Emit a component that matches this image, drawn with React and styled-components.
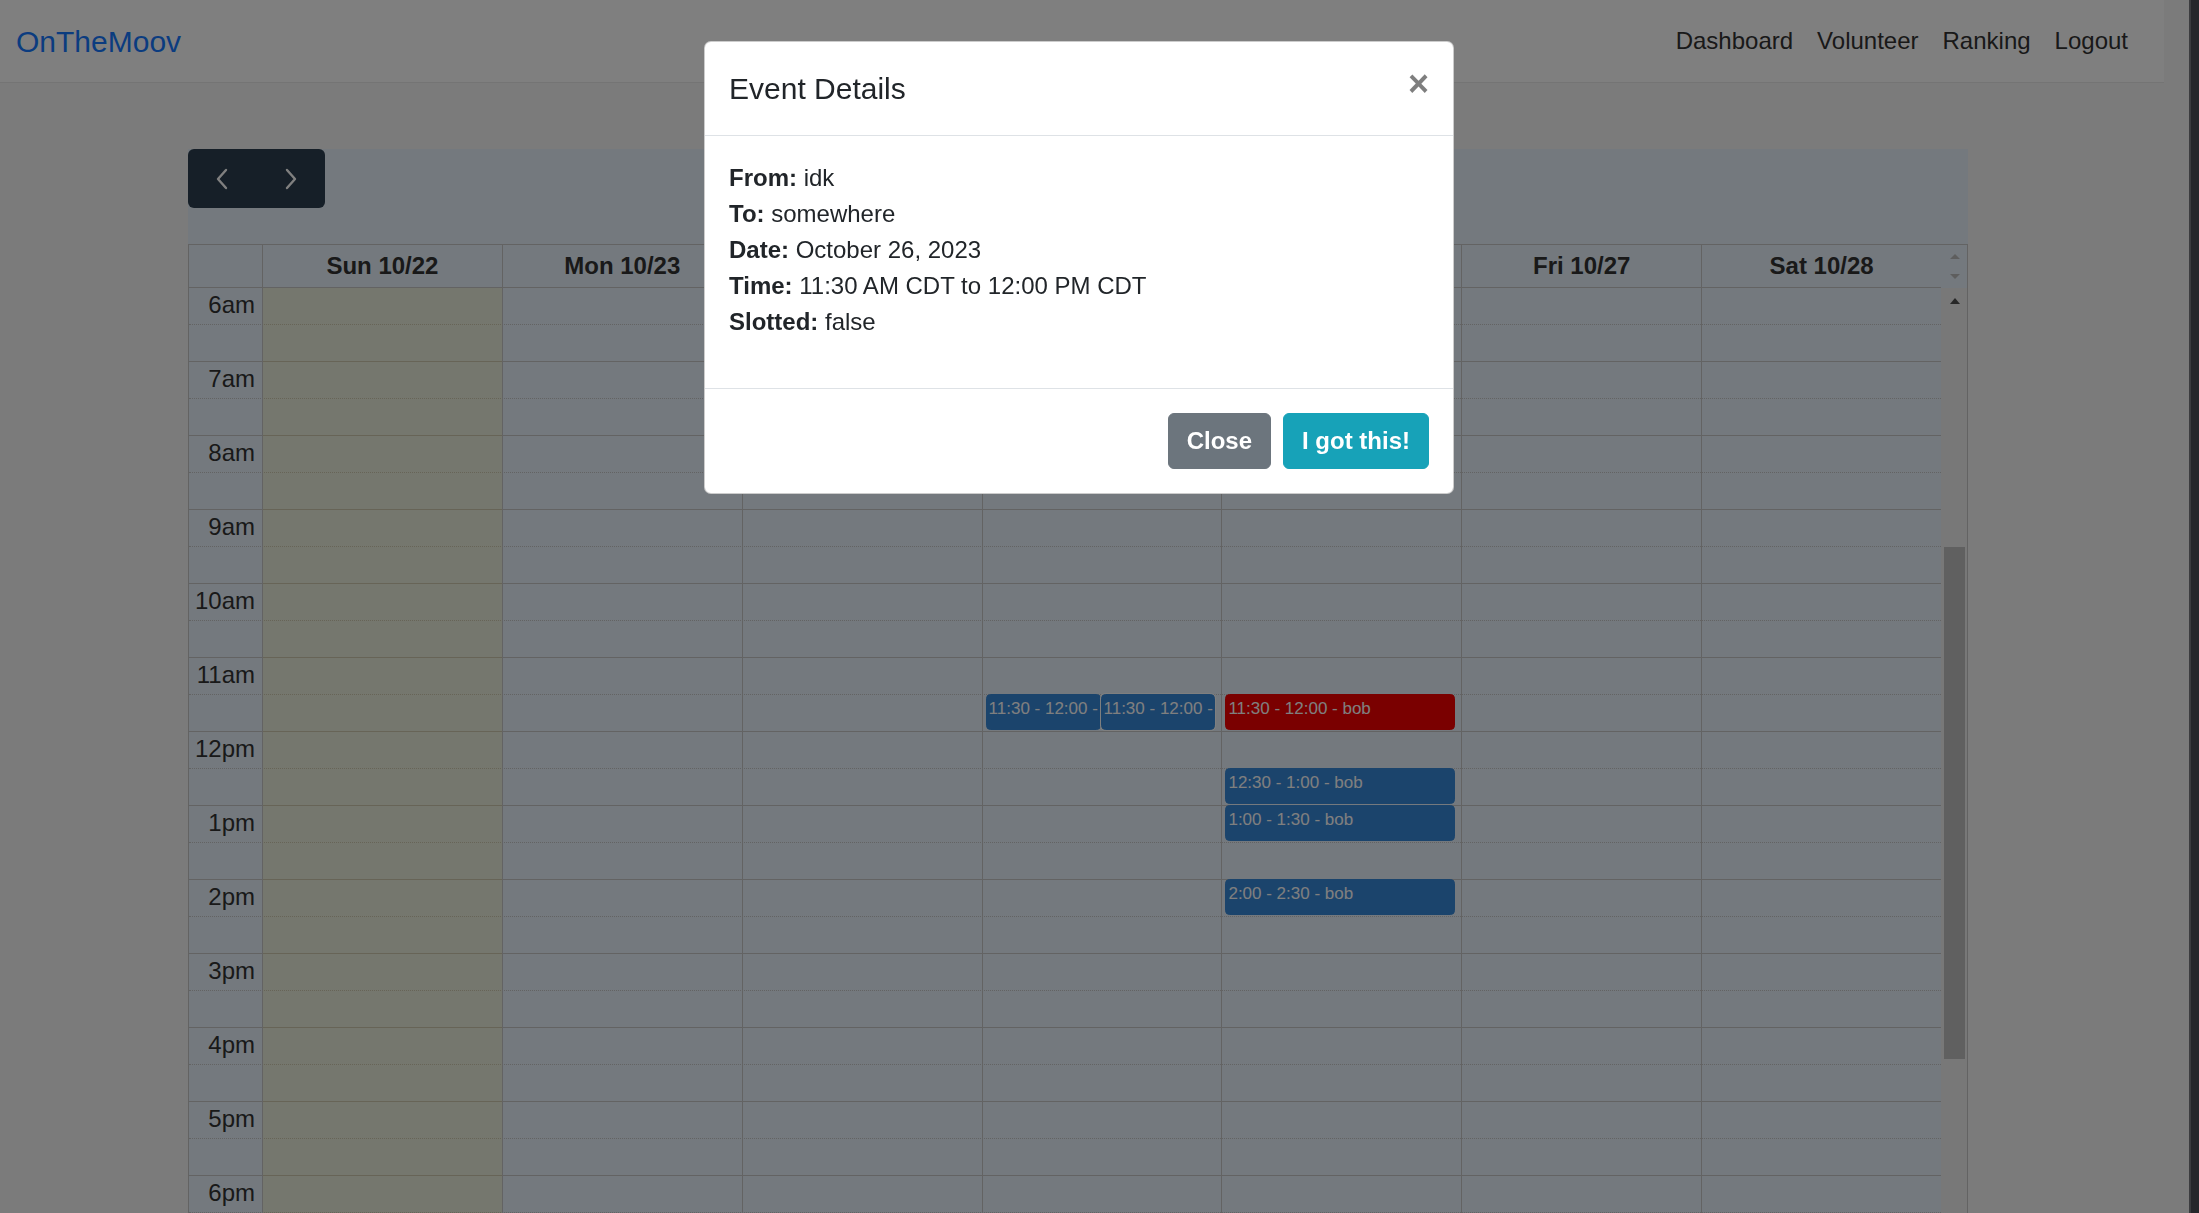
import React from "react";
import styled, { createGlobalStyle } from "styled-components";

const GlobalStyle = createGlobalStyle`
  html, body { margin: 0; padding: 0; height: 100%; overflow: hidden; }
  body { font-family: "Liberation Sans", Arial, sans-serif; color: #212529; }
  *, *::before, *::after { box-sizing: border-box; }
`;

const LINE = "#c6c6c6";
const HOUR = 74;
const START_HOUR = 6;

const Screen = styled.div`
  display: flex;
  width: 100vw;
  height: 100vh;
  overflow: hidden;
`;

const Page = styled.div`
  flex: 1;
  min-width: 0;
  background: #f6f6f6;
  padding-right: 25px;
  display: flex;
  flex-direction: column;
`;

const EdgeStrip = styled.div`
  flex: none;
  width: 10px;
  background: #4c4e56;
  border-left: 2px solid #76787e;
`;

const Navbar = styled.nav`
  flex: none;
  height: 83px;
  background: #fff;
  border-bottom: 1px solid #e8e8e8;
  display: flex;
  align-items: center;
  justify-content: space-between;
  padding: 0 24px 0 16px;
`;

const Brand = styled.a`
  font-size: 30px;
  line-height: 45px;
  color: #1779ff;
  text-decoration: none;
`;

const NavList = styled.ul`
  display: flex;
  list-style: none;
  margin: 0;
  padding: 0;
`;

const NavLink = styled.a`
  display: block;
  padding: 12px;
  font-size: 24px;
  line-height: 36px;
  color: #333;
  text-decoration: none;
`;

const Main = styled.main`
  padding: 66px 196px 0 188px;
`;

const Calendar = styled.div`
  background: #e8f2fc;
`;

const Toolbar = styled.div`
  display: flex;
  margin-bottom: 36px;
`;

const NavGroup = styled.div`
  display: flex;
  background: #2c3e50;
  border-radius: 6px;
  overflow: hidden;
`;

const NavButton = styled.button`
  width: 68.5px;
  height: 59px;
  padding: 0;
  border: 0;
  background: transparent;
  display: flex;
  align-items: center;
  justify-content: center;
  cursor: pointer;
`;

const Table = styled.div`
  border: 1px solid ${LINE};
  border-bottom: 0;
`;

const HeaderRow = styled.div`
  display: grid;
  grid-template-columns: 73px repeat(7, 1fr) 26px;
  height: 43px;
`;

const AxisHead = styled.div`
  border-bottom: 1px solid ${LINE};
`;

const DayHead = styled.div`
  border-left: 1px solid ${LINE};
  border-bottom: 1px solid ${LINE};
  display: flex;
  align-items: center;
  justify-content: center;
  font-size: 24px;
  font-weight: 700;
  color: #333;
`;

const HeadCorner = styled.div`
  display: flex;
  flex-direction: column;
  align-items: center;
  padding: 9px 0 0 2px;
  gap: 15px;
`;

const Arrow = styled.span`
  width: 0;
  height: 0;
  border-left: 5.5px solid transparent;
  border-right: 5.5px solid transparent;
  ${(p) =>
    p.$down
      ? `border-top: ${p.$size || 5}px solid ${p.$color};`
      : `border-bottom: ${p.$size || 5}px solid ${p.$color};`}
`;

const Body = styled.div`
  display: flex;
  height: 1000px;
`;

const Slots = styled.div`
  position: relative;
  flex: 1;
  min-width: 0;
`;

const SlotRow = styled.div`
  height: 37px;
  border-bottom: 1px ${(p) => (p.$hourEnd ? "solid" : "dotted")} ${LINE};
  display: grid;
  grid-template-columns: 73px 1fr;
`;

const TimeLabel = styled.div`
  text-align: right;
  padding-right: 7px;
  font-size: 24px;
  line-height: 34px;
  color: #333;
  white-space: nowrap;
`;

const Columns = styled.div`
  position: absolute;
  inset: 0;
  display: grid;
  grid-template-columns: 73px repeat(7, 1fr);
  pointer-events: none;
`;

const DayColumn = styled.div`
  position: relative;
  border-left: 1px solid ${LINE};
  background: ${(p) => (p.$today ? "rgba(255, 220, 40, 0.15)" : "transparent")};
`;

const EventLane = styled.div`
  position: absolute;
  top: 0;
  bottom: 0;
  left: 3px;
  right: 2.5%;
`;

const EventBox = styled.div`
  position: absolute;
  background: ${(p) => p.$color};
  border: 1px solid ${(p) => p.$color};
  border-radius: 4.5px;
  padding: 1px 2px 0;
  color: #fff;
  font-size: 17px;
  line-height: 26px;
  white-space: nowrap;
  overflow: hidden;
  box-shadow: ${(p) => (p.$inset ? "0 0 0 1px #fff" : "none")};
`;

const ScrollTrack = styled.div`
  flex: none;
  width: 26px;
  background: #f1f1f1;
  display: flex;
  flex-direction: column;
`;

const ScrollButton = styled.div`
  height: 26px;
  display: flex;
  align-items: center;
  justify-content: center;
  padding-left: 2px;
`;

const ScrollThumb = styled.div`
  margin: 233px 2px 0 3px;
  height: 512px;
  background: #c1c1c1;
`;

const Backdrop = styled.div`
  position: fixed;
  inset: 0;
  z-index: 10;
  background: rgba(0, 0, 0, 0.5);
  padding-right: 41px;
`;

const Dialog = styled.div`
  width: 750px;
  margin: 41px auto 0;
  background: #fff;
  border: 1px solid rgba(0, 0, 0, 0.2);
  border-radius: 7px;
  color: #212529;
`;

const ModalHeader = styled.div`
  display: flex;
  align-items: flex-start;
  justify-content: space-between;
  padding: 24px;
  border-bottom: 1px solid #dee2e6;
`;

const ModalTitle = styled.h5`
  margin: 0;
  font-size: 30px;
  line-height: 45px;
  font-weight: 500;
`;

const CloseX = styled.button`
  margin: -24px -24px -24px auto;
  padding: 24px;
  background: transparent;
  border: 0;
  font-family: inherit;
  font-size: 36px;
  font-weight: 700;
  line-height: 1;
  color: #000;
  opacity: 0.5;
  text-shadow: 0 1px 0 #fff;
  cursor: pointer;
`;

const ModalBody = styled.div`
  padding: 24px;
`;

const Details = styled.p`
  margin: 0 0 24px;
  font-size: 24px;
  line-height: 36px;
`;

const ModalFooter = styled.div`
  display: flex;
  justify-content: flex-end;
  gap: 12px;
  padding: 24px;
  border-top: 1px solid #dee2e6;
`;

const Btn = styled.button`
  height: 56px;
  padding: 0 18px;
  border: 1px solid ${(p) => p.$bg};
  border-radius: 6px;
  background: ${(p) => p.$bg};
  color: #fff;
  font-family: inherit;
  font-size: 24px;
  font-weight: 700;
  cursor: pointer;
`;

const Chevron = ({ dir }) => (
  <svg width="14" height="22" viewBox="0 0 14 22" aria-hidden="true">
    <path
      d={dir === "left" ? "M11 2 L3 11 L11 20" : "M3 2 L11 11 L3 20"}
      fill="none"
      stroke="#fff"
      strokeWidth="2.4"
      strokeLinecap="round"
      strokeLinejoin="round"
    />
  </svg>
);

const BLUE = "#3788d8";
const RED = "#f40000";

const days = [
  { label: "Sun 10/22", today: true, events: [] },
  { label: "Mon 10/23", events: [] },
  { label: "Tue 10/24", events: [] },
  {
    label: "Wed 10/25",
    events: [
      { start: 11.5, end: 12, title: "11:30 - 12:00 - bob", color: BLUE, col: 0, cols: 2 },
      { start: 11.5, end: 12, title: "11:30 - 12:00 - bob", color: BLUE, col: 1, cols: 2 },
    ],
  },
  {
    label: "Thu 10/26",
    events: [
      { start: 11.5, end: 12, title: "11:30 - 12:00 - bob", color: RED },
      { start: 12.5, end: 13, title: "12:30 - 1:00 - bob", color: BLUE },
      { start: 13, end: 13.5, title: "1:00 - 1:30 - bob", color: BLUE },
      { start: 14, end: 14.5, title: "2:00 - 2:30 - bob", color: BLUE },
    ],
  },
  { label: "Fri 10/27", events: [] },
  { label: "Sat 10/28", events: [] },
];

const hourLabel = (h) => {
  const suffix = h < 12 ? "am" : "pm";
  const n = h % 12 === 0 ? 12 : h % 12;
  return `${n}${suffix}`;
};

const slots = [];
for (let h = START_HOUR; h < 20; h++) {
  slots.push({ key: `${h}-0`, label: hourLabel(h), hourEnd: false });
  slots.push({ key: `${h}-30`, label: "", hourEnd: true });
}

const navLinks = ["Dashboard", "Volunteer", "Ranking", "Logout"];

export default function App() {
  return (
    <>
      <GlobalStyle />
      <Screen>
        <Page>
          <Navbar>
            <Brand href="#">OnTheMoov</Brand>
            <NavList>
              {navLinks.map((l) => (
                <li key={l}>
                  <NavLink href="#">{l}</NavLink>
                </li>
              ))}
            </NavList>
          </Navbar>
          <Main>
            <Calendar>
              <Toolbar>
                <NavGroup>
                  <NavButton aria-label="prev">
                    <Chevron dir="left" />
                  </NavButton>
                  <NavButton aria-label="next">
                    <Chevron dir="right" />
                  </NavButton>
                </NavGroup>
              </Toolbar>
              <Table>
                <HeaderRow>
                  <AxisHead />
                  {days.map((d) => (
                    <DayHead key={d.label}>{d.label}</DayHead>
                  ))}
                  <HeadCorner>
                    <Arrow $color="#bdbdbd" />
                    <Arrow $down $color="#bdbdbd" />
                  </HeadCorner>
                </HeaderRow>
                <Body>
                  <Slots>
                    {slots.map((s) => (
                      <SlotRow key={s.key} $hourEnd={s.hourEnd}>
                        <TimeLabel>{s.label}</TimeLabel>
                        <div />
                      </SlotRow>
                    ))}
                    <Columns>
                      <div />
                      {days.map((d) => (
                        <DayColumn key={d.label} $today={d.today}>
                          <EventLane>
                            {d.events.map((e, i) => {
                              const cols = e.cols || 1;
                              const col = e.col || 0;
                              return (
                                <EventBox
                                  key={i}
                                  $color={e.color}
                                  $inset={col > 0}
                                  style={{
                                    top: (e.start - START_HOUR) * HOUR - 1,
                                    height: (e.end - e.start) * HOUR - 1,
                                    left: `${(col / cols) * 100}%`,
                                    width: `${100 / cols}%`,
                                  }}
                                >
                                  {e.title}
                                </EventBox>
                              );
                            })}
                          </EventLane>
                        </DayColumn>
                      ))}
                    </Columns>
                  </Slots>
                  <ScrollTrack>
                    <ScrollButton>
                      <Arrow $color="#505050" $size={6} />
                    </ScrollButton>
                    <ScrollThumb />
                  </ScrollTrack>
                </Body>
              </Table>
            </Calendar>
          </Main>
        </Page>
        <EdgeStrip />
      </Screen>
      <Backdrop>
        <Dialog role="dialog">
          <ModalHeader>
            <ModalTitle>Event Details</ModalTitle>
            <CloseX aria-label="Close">×</CloseX>
          </ModalHeader>
          <ModalBody>
            <Details>
              <b>From:</b> idk
              <br />
              <b>To:</b> somewhere
              <br />
              <b>Date:</b> October 26, 2023
              <br />
              <b>Time:</b> 11:30 AM CDT to 12:00 PM CDT
              <br />
              <b>Slotted:</b> false
            </Details>
          </ModalBody>
          <ModalFooter>
            <Btn $bg="#6c757d">Close</Btn>
            <Btn $bg="#17a2b8">I got this!</Btn>
          </ModalFooter>
        </Dialog>
      </Backdrop>
    </>
  );
}
